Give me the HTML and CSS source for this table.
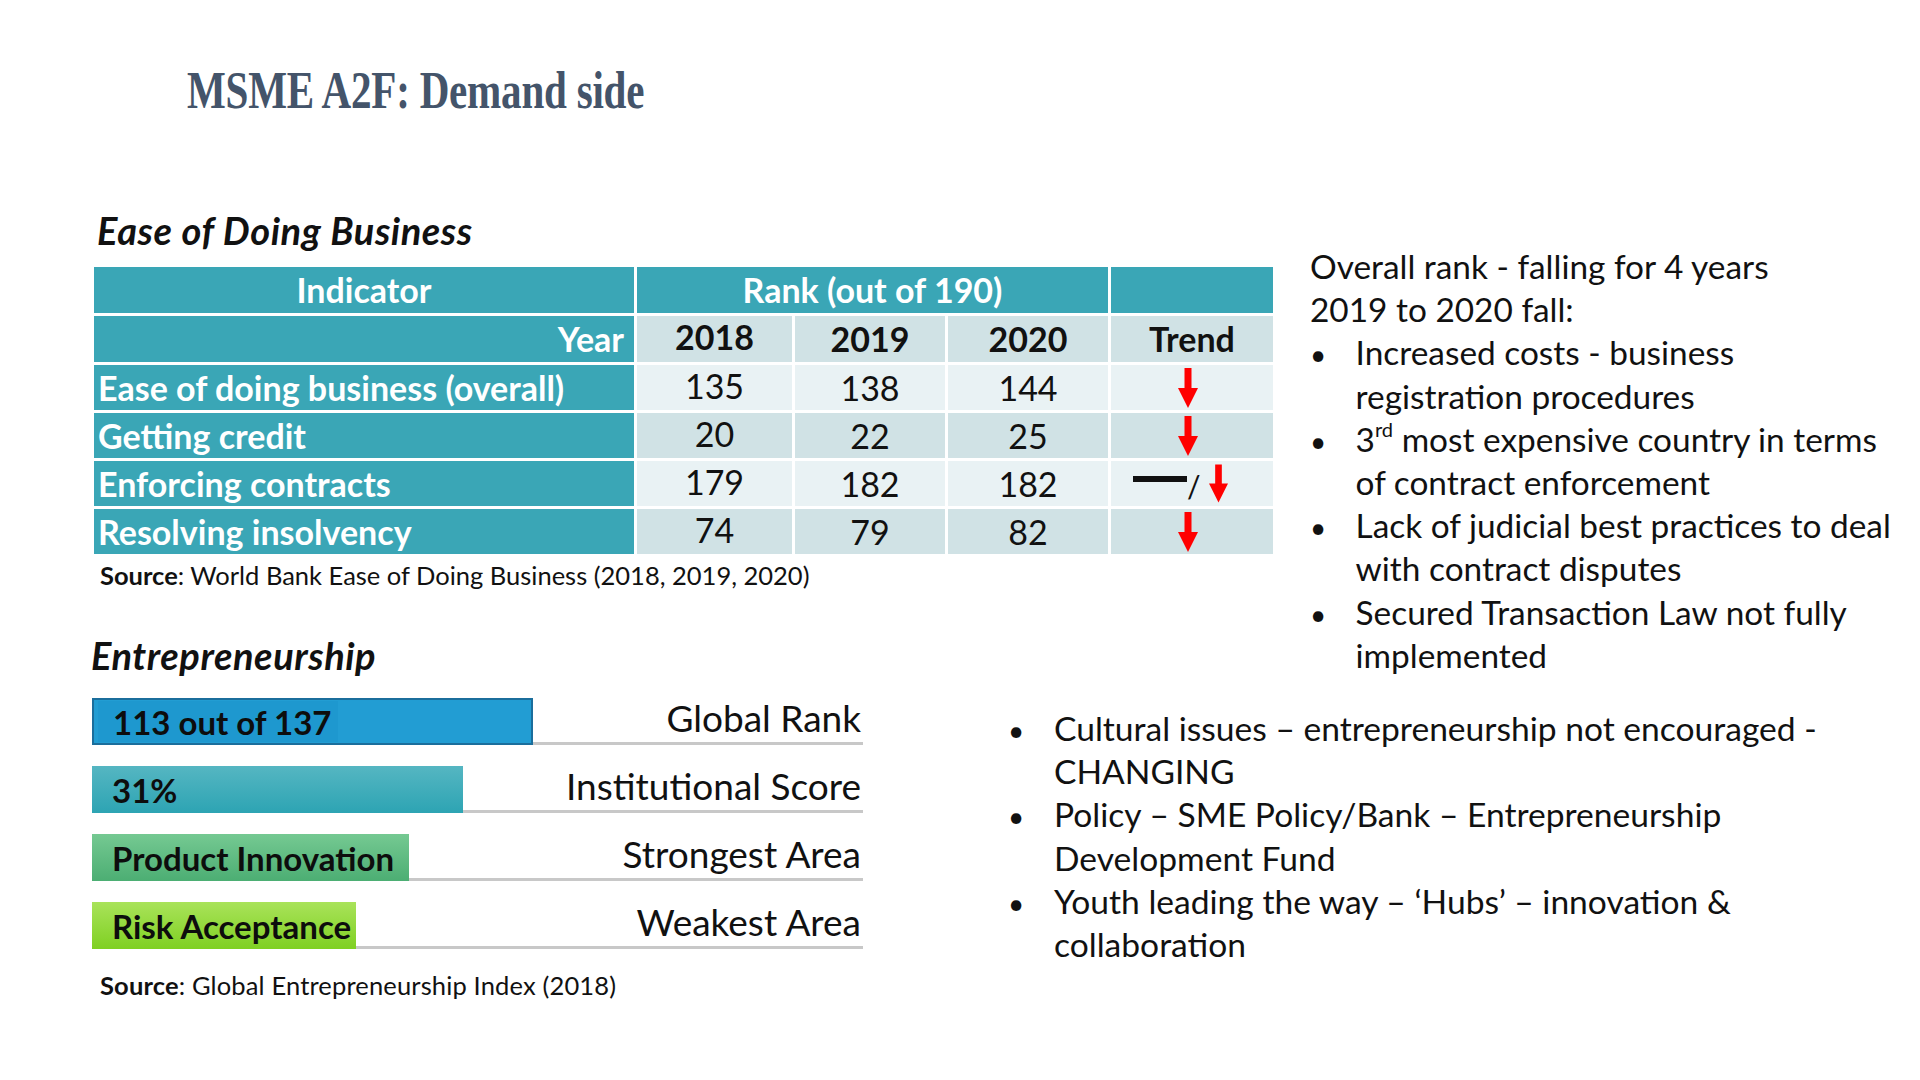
FILE: index.html
```html
<!DOCTYPE html>
<html lang="en">
<head>
<meta charset="utf-8">
<title>MSME A2F: Demand side</title>
<link rel="stylesheet" href="styles.css">
</head>
<body>
<div class="slide">
  <header class="title-wrap">
    <h1 class="title">MSME A2F: Demand side</h1>
  </header>

  <section class="upper">
    <div class="left-col">
      <h2 class="heading eodb">Ease of Doing Business</h2>
      <div class="rank-table">
        <div class="cell head">Indicator</div>
        <div class="cell head span3">Rank (out of 190)</div>
        <div class="cell head"></div>

        <div class="cell head year">Year</div>
        <div class="cell sub dark hi">2018</div>
        <div class="cell sub dark">2019</div>
        <div class="cell sub dark">2020</div>
        <div class="cell sub dark">Trend</div>

        <div class="cell ind">Ease of doing business (overall)</div>
        <div class="cell num light hi">135</div>
        <div class="cell num light">138</div>
        <div class="cell num light">144</div>
        <div class="cell num light"><svg class="arrow" viewBox="0 0 20 40" aria-hidden="true"><rect x="6.5" y="0" width="7" height="21"/><polygon points="0,20 20,20 10,40"/></svg></div>

        <div class="cell ind">Getting credit</div>
        <div class="cell num dark hi">20</div>
        <div class="cell num dark">22</div>
        <div class="cell num dark">25</div>
        <div class="cell num dark"><svg class="arrow" viewBox="0 0 20 40" aria-hidden="true"><rect x="6.5" y="0" width="7" height="21"/><polygon points="0,20 20,20 10,40"/></svg></div>

        <div class="cell ind">Enforcing contracts</div>
        <div class="cell num light hi">179</div>
        <div class="cell num light">182</div>
        <div class="cell num light">182</div>
        <div class="cell num light mixed"><span class="dash"></span><span class="slash">/</span><svg class="arrow small" viewBox="0 0 20 40" aria-hidden="true"><rect x="6.5" y="0" width="7" height="21"/><polygon points="0,20 20,20 10,40"/></svg></div>

        <div class="cell ind">Resolving insolvency</div>
        <div class="cell num dark hi">74</div>
        <div class="cell num dark">79</div>
        <div class="cell num dark">82</div>
        <div class="cell num dark"><svg class="arrow" viewBox="0 0 20 40" aria-hidden="true"><rect x="6.5" y="0" width="7" height="21"/><polygon points="0,20 20,20 10,40"/></svg></div>
      </div>
      <p class="source"><b>Source</b>: World Bank Ease of Doing Business (2018, 2019, 2020)</p>
      <h2 class="heading entre">Entrepreneurship</h2>
    </div>

    <div class="right-col">
      <p class="line">Overall rank - falling for 4 years</p>
      <p class="line">2019 to 2020 fall:</p>
      <ul class="bullets">
        <li><span class="dot">•</span><span class="txt">Increased costs - business<br>registration procedures</span></li>
        <li><span class="dot">•</span><span class="txt">3<sup>rd</sup> most expensive country in terms<br>of contract enforcement</span></li>
        <li><span class="dot">•</span><span class="txt">Lack of judicial best practices to deal<br>with contract disputes</span></li>
        <li><span class="dot">•</span><span class="txt">Secured Transaction Law not fully<br>implemented</span></li>
      </ul>
    </div>
  </section>

  <section class="lower">
    <div class="bars">
      <div class="bar-row">
        <div class="bar b1" style="width:441px"><span class="bar-text">113 out of 137</span></div>
        <div class="bar-label">Global Rank</div>
      </div>
      <div class="bar-row">
        <div class="bar b2" style="width:371px"><span class="bar-text">31%</span></div>
        <div class="bar-label">Institutional Score</div>
      </div>
      <div class="bar-row">
        <div class="bar b3" style="width:317px"><span class="bar-text">Product Innovation</span></div>
        <div class="bar-label">Strongest Area</div>
      </div>
      <div class="bar-row">
        <div class="bar b4" style="width:264px"><span class="bar-text">Risk Acceptance</span></div>
        <div class="bar-label">Weakest Area</div>
      </div>
      <p class="source src2"><b>Source</b>: Global Entrepreneurship Index (2018)</p>
    </div>

    <ul class="bullets culture">
      <li><span class="dot">•</span><span class="txt">Cultural issues – entrepreneurship not encouraged -<br>CHANGING</span></li>
      <li><span class="dot">•</span><span class="txt">Policy – SME Policy/Bank – Entrepreneurship<br>Development Fund</span></li>
      <li><span class="dot">•</span><span class="txt">Youth leading the way – ‘Hubs’ – innovation &amp;<br>collaboration</span></li>
    </ul>
  </section>
</div>
</body>
</html>
```

FILE: styles.css
```css
* { box-sizing: border-box; }

html, body {
  margin: 0;
  padding: 0;
  background: #ffffff;
}

body {
  font-family: "Lato", "Liberation Sans", sans-serif;
  color: #111111;
}

.slide {
  width: 1920px;
  height: 1080px;
  overflow: hidden;
  background: #ffffff;
}

/* ---------- title ---------- */
.title-wrap {
  padding: 65px 0 0 187px;
  height: 116px;
}

.title {
  margin: 0;
  display: inline-block;
  font-family: "Liberation Serif", "Times New Roman", serif;
  font-weight: 700;
  font-size: 52px;
  line-height: 52px;
  color: #44546a;
  letter-spacing: -0.3px;
  transform: scaleX(0.79);
  transform-origin: left center;
  white-space: nowrap;
}

/* ---------- upper section ---------- */
.upper {
  display: flex;
  align-items: flex-start;
  margin-top: 92px;
}

.left-col {
  width: 1179px;
  margin-left: 94px;
  flex: none;
}

.heading {
  margin: 0;
  font-size: 38px;
  line-height: 44px;
  font-weight: 700;
  font-style: italic;
  letter-spacing: 0.55px;
  color: #111111;
  white-space: nowrap;
}

.heading.eodb { padding-left: 3px; }
.heading.entre { margin: 43px 0 0 -3px; }

/* table */
.rank-table {
  margin-top: 15px;
  display: grid;
  grid-template-columns: 540px 155px 150px 160px 162px;
  grid-template-rows: 46px 46px 45px 45px 45px 45px;
  gap: 3px;
}

.cell {
  display: flex;
  align-items: center;
  justify-content: center;
  font-size: 34px;
  line-height: 40px;
  white-space: nowrap;
}

.cell.head {
  background: #3aa6b6;
  color: #ffffff;
  font-weight: 700;
}

.cell.span3 { grid-column: span 3; }

.cell.year {
  justify-content: flex-end;
  padding-right: 10px;
}

.cell.ind {
  background: #3aa6b6;
  color: #ffffff;
  font-weight: 700;
  justify-content: flex-start;
  padding-left: 4px;
}

.cell.sub { font-weight: 700; color: #111111; }
.cell.num { font-weight: 400; color: #111111; }

.cell.dark { background: #d0e2e5; }
.cell.light { background: #e9f2f4; }

.cell.hi { padding-bottom: 4px; }

.arrow {
  width: 20px;
  height: 40px;
  fill: #ff0000;
  margin-right: 8px;
}

.cell.mixed {
  justify-content: flex-start;
  padding-left: 22px;
}

.dash {
  display: block;
  width: 54px;
  height: 6px;
  background: #111111;
  margin-top: -10px;
}

.slash {
  font-size: 30px;
  line-height: 36px;
  margin: 4px 8px 0 0;
}

.arrow.small {
  width: 19px;
  height: 41px;
  margin: 0;
}

.source {
  margin: 6px 0 0 6px;
  font-size: 25.5px;
  line-height: 30px;
  white-space: nowrap;
}

.source b { font-weight: 700; }

/* right column */
.right-col {
  margin-left: 37px;
  padding-top: 37px;
  font-size: 33.4px;
  line-height: 43.2px;
}

.line { margin: 0; white-space: nowrap; }

.bullets {
  list-style: none;
  margin: 0;
  padding: 0;
}

.bullets li {
  display: flex;
  align-items: baseline;
  white-space: nowrap;
}

.dot {
  flex: none;
  font-size: 28px;
}

.right-col .dot {
  width: 45.6px;
}

.txt sup {
  font-size: 0.6em;
  line-height: 0;
  vertical-align: 0.75em;
}

/* ---------- lower section ---------- */
.lower {
  display: flex;
  align-items: flex-start;
}

.bars {
  width: 771px;
  margin-left: 92px;
  flex: none;
  padding-top: 21px;
}

.bar-row {
  display: flex;
  height: 47px;
  margin-bottom: 21px;
}

.bar {
  flex: none;
  height: 47px;
  display: flex;
  align-items: center;
  padding-left: 20px;
}

.bar-text {
  font-size: 33px;
  font-weight: 700;
  line-height: 40px;
  color: #0d0d0d;
  white-space: nowrap;
}

.bar.b1 {
  background: #229dd3;
  border: 2px solid #1b6e9c;
  padding-left: 4px;
}

.bar.b1 .bar-text {
  background: #1e98cf;
  padding: 0 6px 0 15px;
  height: 41px;
  display: flex;
  align-items: center;
}

.bar.b2 { background: linear-gradient(#55b6c2, #2da4b3); }
.bar.b3 { background: linear-gradient(#75c992, #4cae73); }
.bar.b4 { background: linear-gradient(#a9e35a, #7fd022); }

.bar-label {
  flex: 1;
  display: flex;
  align-items: flex-end;
  justify-content: flex-end;
  border-bottom: 3px solid #c8c8c8;
  padding: 0 2px 4px 0;
  font-size: 37px;
  line-height: 40px;
  white-space: nowrap;
}

.source.src2 {
  margin: 4px 0 0 8px;
  letter-spacing: 0.15px;
}

.culture {
  margin-left: 152px;
  padding-top: 30px;
  font-size: 33.6px;
  line-height: 43.2px;
}

.culture .dot {
  width: 46px;
  margin-left: -7px;
}
```
